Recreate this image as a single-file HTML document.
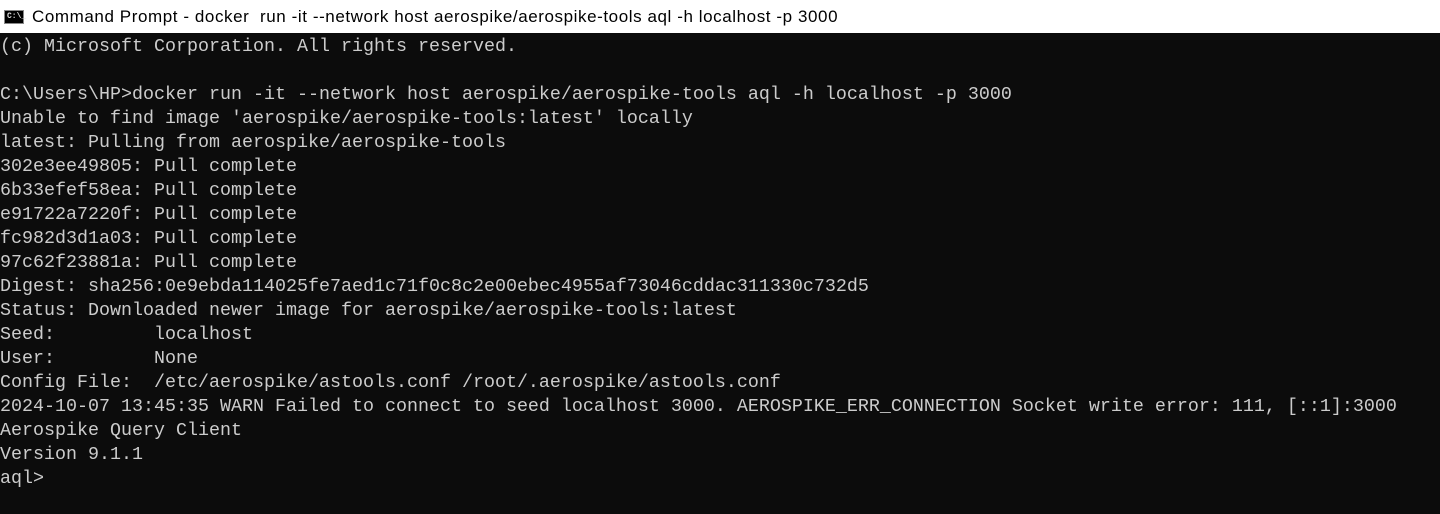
<!DOCTYPE html>
<html><head><style>
html,body{margin:0;padding:0;width:1440px;height:514px;overflow:hidden;background:#0c0c0c}
.t{position:absolute;left:0;top:0;width:1440px;height:33px;background:#fff;}
.t span{position:absolute;left:32px;top:7px;font:17px "Liberation Sans",sans-serif;letter-spacing:0.58px;color:#000;white-space:nowrap}
.ic{position:absolute;left:4px;top:10px;width:20px;height:14px;background:#000;border:1px solid #888;box-sizing:border-box}
.ic b{position:absolute;left:2px;top:1px;font:bold 8px "Liberation Mono",monospace;color:#ddd}
pre{position:absolute;left:0;top:35px;margin:0;font:18.33px/24px "Liberation Mono",monospace;color:#cccccc;white-space:pre}
</style></head><body>
<div class="t"><div class="ic"><b>C:\_</b></div><span>Command Prompt - docker&nbsp; run -it --network host aerospike/aerospike-tools aql -h localhost -p 3000</span></div>
<pre>(c) Microsoft Corporation. All rights reserved.

C:\Users\HP&gt;docker run -it --network host aerospike/aerospike-tools aql -h localhost -p 3000
Unable to find image 'aerospike/aerospike-tools:latest' locally
latest: Pulling from aerospike/aerospike-tools
302e3ee49805: Pull complete
6b33efef58ea: Pull complete
e91722a7220f: Pull complete
fc982d3d1a03: Pull complete
97c62f23881a: Pull complete
Digest: sha256:0e9ebda114025fe7aed1c71f0c8c2e00ebec4955af73046cddac311330c732d5
Status: Downloaded newer image for aerospike/aerospike-tools:latest
Seed:         localhost
User:         None
Config File:  /etc/aerospike/astools.conf /root/.aerospike/astools.conf
2024-10-07 13:45:35 WARN Failed to connect to seed localhost 3000. AEROSPIKE_ERR_CONNECTION Socket write error: 111, [::1]:3000
Aerospike Query Client
Version 9.1.1
aql&gt;</pre>
</body></html>
